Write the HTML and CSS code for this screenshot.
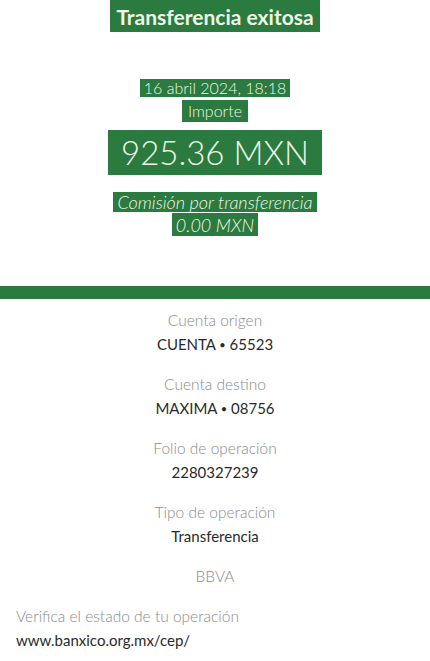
FILE: index.html
```html
<!DOCTYPE html>
<html lang="es">
<head>
    <meta charset="UTF-8">
    <link rel="stylesheet" href="styles.css">
    <title>Transferencia exitosa</title>
</head>
<body>
<div id="head">
    <div class="line title"><span class="mark">Transferencia exitosa</span></div>
    <div class="line date"><span class="mark">16 abril 2024, 18:18</span></div>
    <div class="line sub"><span class="mark">Importe</span></div>
    <div class="line amount"><span class="mark">925.36 MXN</span></div>
    <div class="line fee"><span class="mark">Comisión por transferencia</span></div>
    <div class="line fee"><span class="mark">0.00 MXN</span></div>
</div>

<div id="bar"></div>

<div id="details">
    <div class="item">
        <div class="label">Cuenta origen</div>
        <div class="value">CUENTA <span class="dot">•</span> 65523</div>
    </div>
    <div class="item">
        <div class="label">Cuenta destino</div>
        <div class="value">MAXIMA <span class="dot">•</span> 08756</div>
    </div>
    <div class="item">
        <div class="label">Folio de operación</div>
        <div class="value">2280327239</div>
    </div>
    <div class="item">
        <div class="label">Tipo de operación</div>
        <div class="value">Transferencia</div>
    </div>
    <div class="item">
        <div class="label">BBVA</div>
    </div>
</div>

<div id="verify">
    <div class="label">Verifica el estado de tu operación</div>
    <div class="value">www.banxico.org.mx/cep/</div>
</div>
</body>
</html>
```

FILE: styles.css
```css
body {
    margin: 0;
    padding: 0;
    background: #fff;
    font-family: Lato, "Open Sans", sans-serif;
    color: #222;
}

#head {
    text-align: center;
    padding-bottom: 50px;
}

.line {
    line-height: 1;
    font-weight: 300;
}

.mark {
    display: inline-block;
    vertical-align: top;
    background: #2b7a3f;
    color: #eef7e8;
    padding: 1px 4px;
}

.title {
    font-size: 21px;
    font-weight: bold;
}

.title .mark {
    padding: 6px 6px 5px;
}

.date {
    margin-top: 47px;
    font-size: 16px;
}

.sub {
    margin-top: 3px;
    font-size: 16px;
}

.sub .mark {
    padding: 3px 6px;
}

.amount {
    margin-top: 8px;
    font-size: 33px;
}

.amount .mark {
    padding: 6px 13px;
}

.fee {
    font-size: 18px;
    font-style: italic;
    margin-top: 1px;
}

.fee:last-child .mark {
    padding: 3px 4px 2px;
}

.amount + .fee {
    margin-top: 17px;
}

#bar {
    height: 13px;
    background: #2b7a3f;
}

#details {
    text-align: center;
    padding-top: 12px;
}

.item {
    margin-bottom: 22px;
}

.label {
    color: #8a8a8a;
    font-size: 15.5px;
    font-weight: 300;
    line-height: 18px;
}

.value {
    font-size: 15px;
    line-height: 18px;
    margin-top: 6px;
    color: #2a2a2a;
}

.dot {
    font-size: 11px;
    line-height: 0;
    vertical-align: 1px;
}

#verify {
    padding: 0 16px;
    margin-top: 8px;
}
```
